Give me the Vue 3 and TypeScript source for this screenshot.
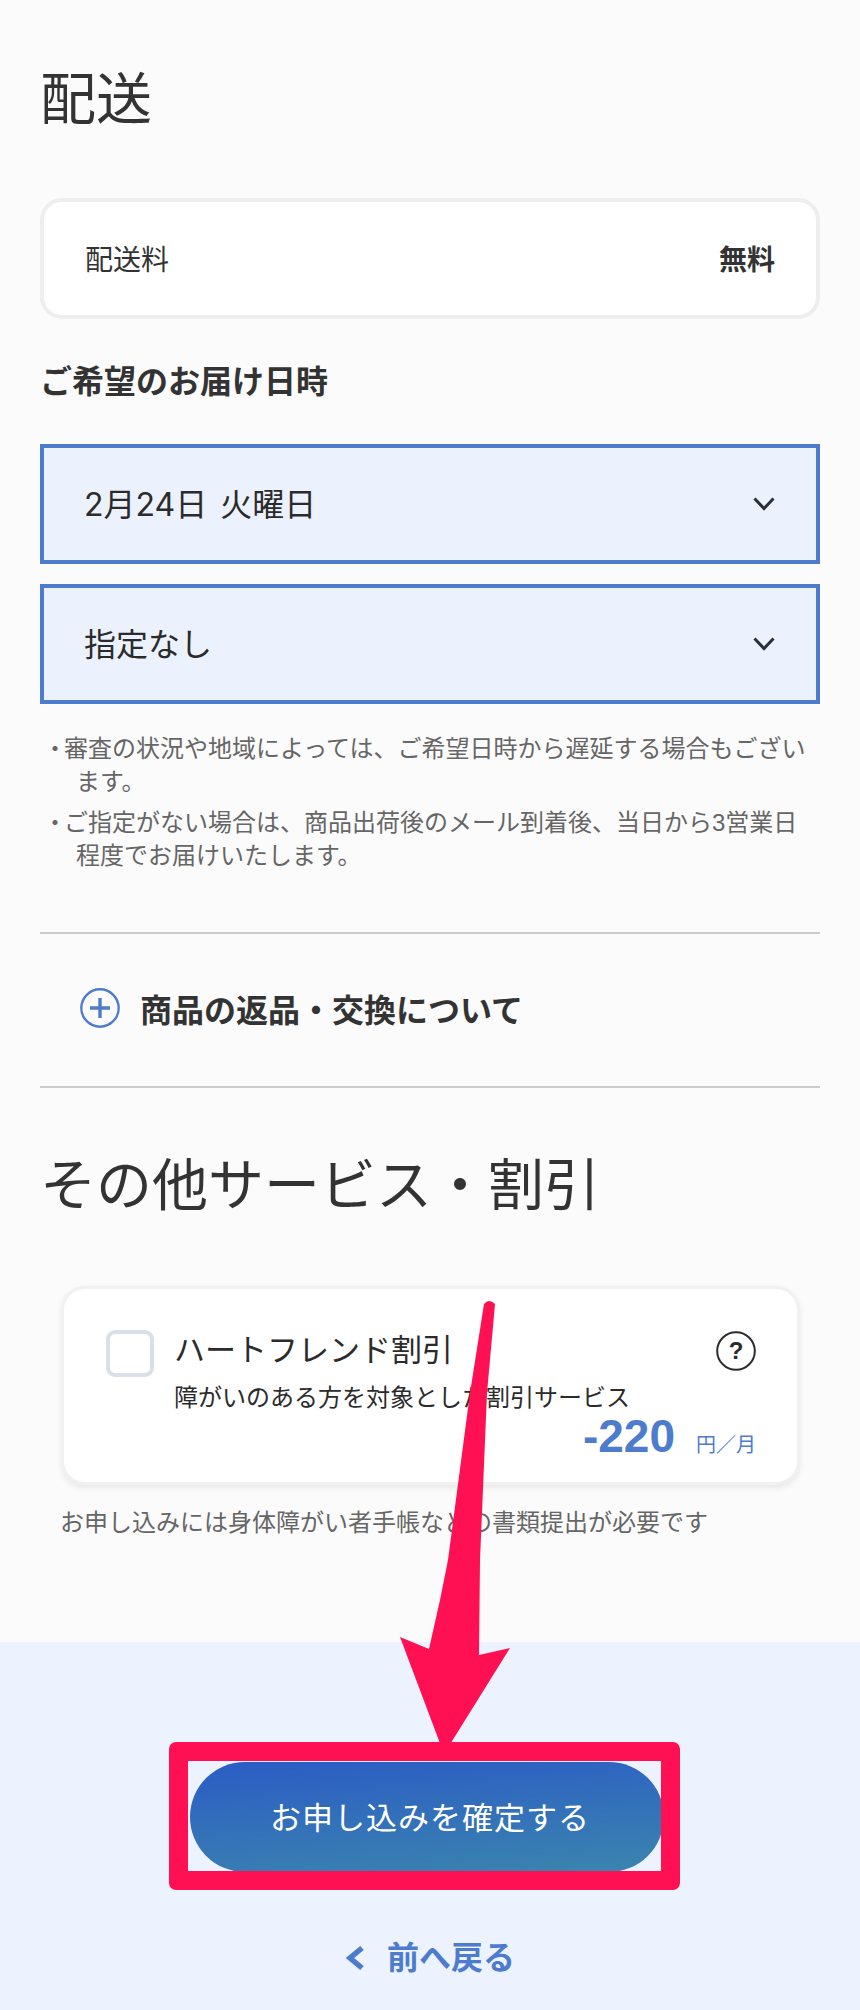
<script setup lang="ts">
const selects: string[] = ['2月24日 火曜日', '指定なし']

const notes: string[] = [
  '審査の状況や地域によっては、ご希望日時から遅延する場合もございます。',
  'ご指定がない場合は、商品出荷後のメール到着後、当日から3営業日程度でお届けいたします。',
]
</script>

<template>
  <div class="page" lang="ja">
    <main class="main">
      <h1 class="title">配送</h1>

      <div class="fee-card">
        <span>配送料</span>
        <strong>無料</strong>
      </div>

      <h2 class="label">ご希望のお届け日時</h2>

      <div class="selects">
        <div v-for="item in selects" :key="item" class="select">
          <span class="select-text">{{ item }}</span>
          <svg width="22" height="14" viewBox="0 0 22 14">
            <path d="M1.5 1.5L11 11.5l9.5-10" fill="none" stroke="#2b3038" stroke-width="3" />
          </svg>
        </div>
      </div>

      <ul class="notes">
        <li v-for="note in notes" :key="note"><span class="dot">・</span>{{ note }}</li>
      </ul>

      <div class="accordion">
        <svg width="40" height="40" viewBox="0 0 40 40">
          <circle cx="20" cy="20" r="18.7" fill="none" stroke="#4d7cce" stroke-width="2.4" />
          <path d="M20 10v20M10 20h20" stroke="#4d7cce" stroke-width="3.4" />
        </svg>
        <span>商品の返品・交換について</span>
      </div>

      <h1 class="title title-other">その他サービス・割引</h1>

      <div class="discount-card">
        <div class="checkbox"></div>
        <div class="discount-body">
          <div class="discount-head">
            <span class="discount-name">ハートフレンド割引</span>
            <svg width="40" height="40" viewBox="0 0 40 40">
              <circle cx="20" cy="20" r="18.8" fill="none" stroke="#2b2b2b" stroke-width="2" />
              <text x="20" y="28" text-anchor="middle" class="help-mark">?</text>
            </svg>
          </div>
          <p class="discount-desc">障がいのある方を対象とした割引サービス</p>
          <div class="price">
            <span class="price-num">-220</span>
            <span class="price-unit">円／月</span>
          </div>
        </div>
      </div>

      <p class="discount-note">お申し込みには身体障がい者手帳などの書類提出が必要です</p>
    </main>

    <footer class="footer">
      <button class="confirm" type="button">お申し込みを確定する</button>
      <a class="back">
        <svg width="20" height="26" viewBox="0 0 20 26">
          <path d="M17 3L5 13l12 10" fill="none" stroke="#4d7cce" stroke-width="5.5" />
        </svg>
        <span>前へ戻る</span>
      </a>
    </footer>

    <!-- annotation drawn on top of the screenshot -->
    <div class="frame"></div>
    <svg class="arrow" width="860" height="2010" viewBox="0 0 860 2010">
      <path
        d="M484 1304 Q489 1298 495 1304 L487 1393 L480 1560 L479 1655 L510 1648 L444 1754 L400 1637 L429 1649 L440 1600 L448 1560 L470 1393 Z"
        fill="#ff1053"
      />
    </svg>
  </div>
</template>

<style>
body {
  background: #fbfbfb;
}
</style>

<style scoped>
.page {
  position: relative;
  width: 860px;
  height: 2010px;
  overflow: hidden;
  background: #fbfbfb;
  color: #333;
  font-family: "Liberation Sans", "Noto Sans CJK JP", sans-serif;
}
.main {
  height: 1642px;
  box-sizing: border-box;
  padding: 64px 40px 0;
}
.title {
  margin: 0;
  font-size: 56px;
  line-height: 72px;
  font-weight: 400;
}
.fee-card {
  margin: 62px 0 0;
  height: 121px;
  box-sizing: border-box;
  padding: 0 41px 2px 41px;
  display: flex;
  align-items: center;
  justify-content: space-between;
  background: #fff;
  border: 4px solid #eee;
  border-radius: 22px;
  font-size: 28px;
}
.fee-card strong {
  font-size: 28px;
}
.label {
  margin: 41px 0 0;
  font-size: 32px;
  line-height: 44px;
  font-weight: 700;
}
.selects {
  margin-top: 40px;
  display: flex;
  flex-direction: column;
  gap: 20px;
}
.select {
  height: 120px;
  box-sizing: border-box;
  padding: 0 41px 0 40px;
  display: flex;
  align-items: center;
  justify-content: space-between;
  background: #ebf2fd;
  border: 4px solid #4d7cce;
  font-size: 32px;
  word-spacing: 4px;
  color: #2b2b2b;
}
.select-text {
  margin-bottom: 5px;
  font-family: Inter, "Noto Sans CJK JP", sans-serif;
}
.notes {
  margin: 28px 0 0;
  padding: 0;
  list-style: none;
  font-size: 24px;
  line-height: 33px;
  color: #666;
}
.notes li {
  padding-left: 36px;
  text-indent: -26px;
}
.notes li + li {
  margin-top: 8px;
}
.dot {
  display: inline-block;
  width: 15px;
  text-indent: 0;
  margin-left: -7px;
  margin-right: 6px;
}
.accordion {
  margin-top: 60px;
  height: 147px;
  padding: 0 0 5px 40px;
  display: flex;
  align-items: center;
  gap: 20px;
  border-top: 2px solid #ccc;
  border-bottom: 2px solid #ccc;
  font-size: 32px;
  font-weight: 700;
}
.title-other {
  margin-top: 62px;
}
.discount-card {
  margin: 64px 20px 0 21px;
  height: 199px;
  box-sizing: border-box;
  padding: 42px 41px 0 42px;
  display: flex;
  gap: 20px;
  background: #fff;
  border: 3px solid #f1f1f1;
  border-radius: 24px;
  box-shadow: 0 3px 6px rgba(0, 0, 0, 0.08);
}
.checkbox {
  flex: none;
  width: 48px;
  height: 47px;
  margin-top: -1px;
  box-sizing: border-box;
  background: #fff;
  border: 4px solid #d9e0e7;
  border-radius: 9px;
}
.discount-body {
  flex: 1;
}
.discount-head {
  display: flex;
  justify-content: space-between;
  height: 40px;
}
.discount-name {
  font-size: 31px;
  line-height: 40px;
  color: #2b2b2b;
}
.help-mark {
  font-size: 24px;
  font-weight: 700;
  fill: #2b2b2b;
}
.discount-desc {
  margin: 10px 0 0;
  font-size: 24px;
  line-height: 34px;
  color: #2b2b2b;
}
.price {
  margin-top: -3px;
  display: flex;
  justify-content: flex-end;
  align-items: baseline;
  gap: 21px;
  color: #4d7cce;
}
.price-num {
  font-size: 46px;
  line-height: 48px;
  font-weight: 700;
}
.price-unit {
  font-size: 20px;
}
.discount-note {
  margin: 21px 0 0 20px;
  font-size: 24px;
  line-height: 34px;
  color: #666;
}
.footer {
  height: 368px;
  box-sizing: border-box;
  padding-top: 120px;
  display: flex;
  flex-direction: column;
  align-items: center;
  background: #ecf2fe;
}
.confirm {
  width: 474px;
  height: 110px;
  margin-right: 6px;
  padding: 0 0 3px 6px;
  border: 0;
  border-radius: 55px;
  background: linear-gradient(176deg, #2b5cc5, #3b85ae);
  color: #fff;
  font-family: inherit;
  font-size: 31px;
  letter-spacing: 1px;
}
.back {
  margin-top: 64px;
  display: flex;
  align-items: center;
  gap: 22px;
  font-size: 32px;
  line-height: 44px;
  font-weight: 700;
  color: #4d7cce;
}
.frame {
  position: absolute;
  left: 169px;
  top: 1742px;
  width: 511px;
  height: 148px;
  box-sizing: border-box;
  border: solid #ff1053;
  border-width: 19px;
  border-radius: 7px;
}
.arrow {
  position: absolute;
  left: 0;
  top: 0;
  pointer-events: none;
}
</style>
